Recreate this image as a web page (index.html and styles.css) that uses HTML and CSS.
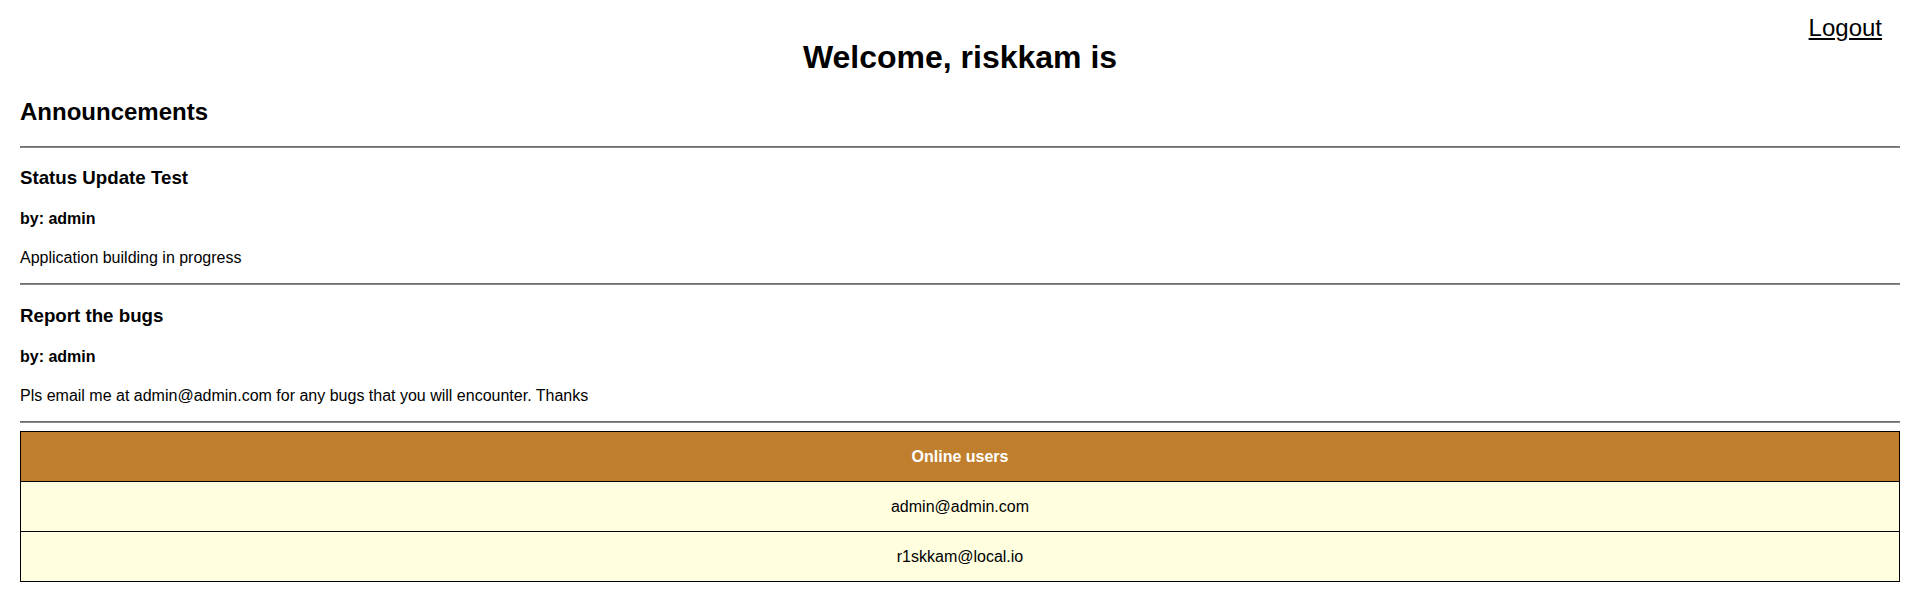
FILE: index.html
```html
<!DOCTYPE html>
<html lang="en">
<head>
<meta charset="utf-8">
<title>Dashboard</title>
<link rel="stylesheet" href="styles.css">
</head>
<body>
<div class="page">
  <header class="topbar">
    <h1 class="welcome">Welcome, riskkam is</h1>
    <a class="logout" href="#">Logout</a>
  </header>

  <h2 class="section-title">Announcements</h2>
  <hr class="divider">

  <article class="announcement">
    <h3 class="ann-title">Status Update Test</h3>
    <h4 class="ann-author">by: admin</h4>
    <p class="ann-body">Application building in progress</p>
  </article>
  <hr class="divider">

  <article class="announcement">
    <h3 class="ann-title">Report the bugs</h3>
    <h4 class="ann-author">by: admin</h4>
    <p class="ann-body">Pls email me at admin@admin.com for any bugs that you will encounter. Thanks</p>
  </article>
  <hr class="divider">

  <table class="users">
    <thead>
      <tr><th class="users-head">Online users</th></tr>
    </thead>
    <tbody>
      <tr><td class="users-cell">admin@admin.com</td></tr>
      <tr><td class="users-cell">r1skkam@local.io</td></tr>
    </tbody>
  </table>
</div>
</body>
</html>
```

FILE: styles.css
```css
html, body {
  margin: 0;
  padding: 0;
  background: #ffffff;
}

body {
  font-family: "Liberation Sans", Arial, sans-serif;
  font-size: 16px;
  color: #000000;
}

.page {
  padding: 0 20px;
}

.topbar {
  display: grid;
  grid-template-columns: 1fr auto 1fr;
  align-items: start;
}

.welcome {
  grid-column: 2;
  margin: 39.2px 0 21.44px 0;
  font-size: 32px;
  font-weight: bold;
  text-align: center;
}

.logout {
  grid-column: 3;
  justify-self: end;
  margin: 14px 18px 0 0;
  font-size: 24px;
  color: #000000;
  text-decoration: underline;
}

.section-title {
  margin: 0 0 19.92px 0;
  font-size: 24px;
  font-weight: bold;
}

.divider {
  margin: 8px 0;
  height: 0;
  border-width: 1px;
  border-style: solid;
  border-top-color: #6e6e6e;
  border-left-color: #6e6e6e;
  border-bottom-color: #8a8a8a;
  border-right-color: #8a8a8a;
}

.announcement {
  display: block;
}

.ann-title {
  margin: 19.27px 0 18.72px 0;
  font-size: 18.72px;
  font-weight: bold;
}

.ann-author {
  margin: 21.28px 0;
  font-size: 16px;
  font-weight: bold;
}

.ann-body {
  margin: 16px 0;
  font-size: 16px;
}

.users {
  width: 100%;
  border-collapse: collapse;
}

.users-head,
.users-cell {
  border: 1px solid #000000;
  padding: 15px;
  line-height: 19px;
  text-align: center;
  font-size: 16px;
}

.users-head {
  background: #bf7f2f;
  color: #ffffff;
  font-weight: bold;
}

.users-cell {
  background: #ffffe0;
}
```
